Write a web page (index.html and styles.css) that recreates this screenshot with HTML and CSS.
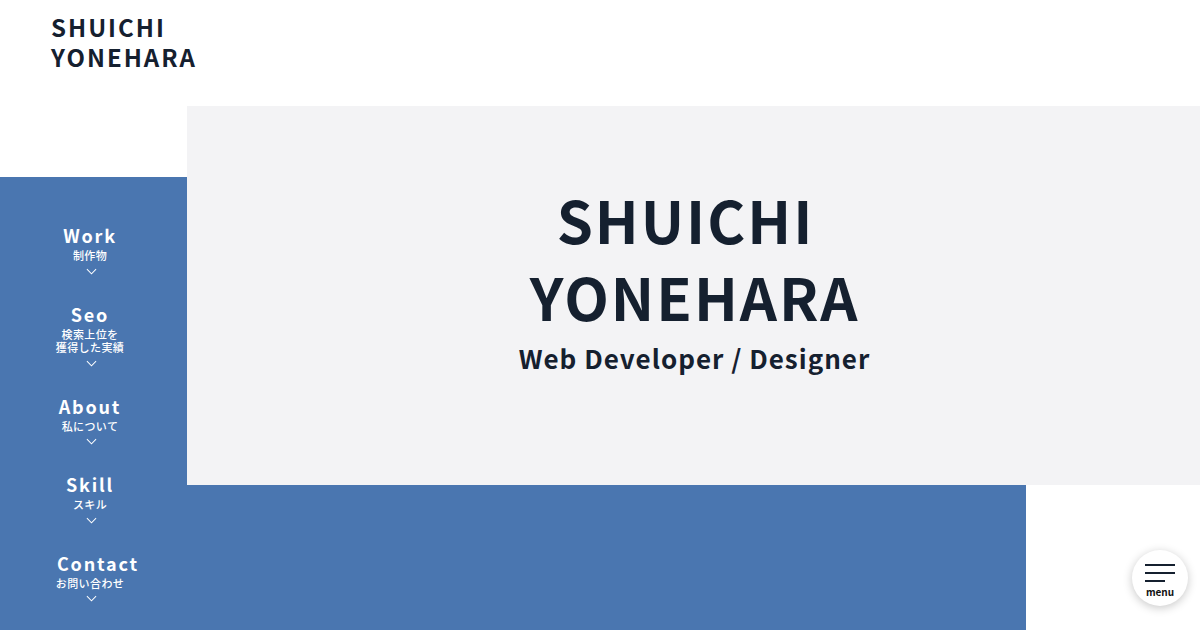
FILE: index.html
```html
<!DOCTYPE html>
<html lang="ja">
<head>
<meta charset="utf-8">
<title>SHUICHI YONEHARA</title>
<link rel="stylesheet" href="styles.css">
</head>
<body>
<div class="page">
  <header class="site-header">
    <a class="logo" href="#">SHUICHI<br>YONEHARA</a>
  </header>
  <div class="stage">
    <section class="hero">
      <h1 class="hero-title"><span class="line-1">SHUICHI</span><br>YONEHARA</h1>
      <p class="hero-sub">Web Developer / Designer</p>
    </section>
    <nav class="side-nav">
      <a class="nav-item" href="#">
        <span class="nav-en">Work</span>
        <span class="nav-ja">制作物</span>
        <svg class="chev" viewBox="0 0 12 7" width="12" height="7"><polyline points="1,1 6,6 11,1"/></svg>
      </a>
      <a class="nav-item" href="#">
        <span class="nav-en">Seo</span>
        <span class="nav-ja">検索上位を<br>獲得した実績</span>
        <svg class="chev" viewBox="0 0 12 7" width="12" height="7"><polyline points="1,1 6,6 11,1"/></svg>
      </a>
      <a class="nav-item" href="#">
        <span class="nav-en">About</span>
        <span class="nav-ja">私について</span>
        <svg class="chev" viewBox="0 0 12 7" width="12" height="7"><polyline points="1,1 6,6 11,1"/></svg>
      </a>
      <a class="nav-item" href="#">
        <span class="nav-en">Skill</span>
        <span class="nav-ja">スキル</span>
        <svg class="chev" viewBox="0 0 12 7" width="12" height="7"><polyline points="1,1 6,6 11,1"/></svg>
      </a>
      <a class="nav-item" href="#">
        <span class="nav-en">Contact</span>
        <span class="nav-ja">お問い合わせ</span>
        <svg class="chev" viewBox="0 0 12 7" width="12" height="7"><polyline points="1,1 6,6 11,1"/></svg>
      </a>
    </nav>
    <div class="bottom-block"></div>
  </div>
  <button class="menu-btn" type="button">
    <span class="menu-lines"><i></i><i></i><i class="short"></i></span>
    <span class="menu-label">menu</span>
  </button>
</div>
</body>
</html>
```

FILE: styles.css
```css
* { box-sizing: border-box; margin: 0; padding: 0; }
html, body { width: 1200px; height: 630px; overflow: hidden; background: #fff; }
body {
  font-family: "Noto Sans CJK JP", "Noto Sans", sans-serif;
  color: #15202f;
}
a { color: inherit; text-decoration: none; }

.page { position: relative; width: 1200px; height: 630px; display: flex; flex-direction: column; }

.site-header { height: 106px; padding: 12px 0 0 51px; }
.logo {
  display: block;
  font-size: 24px;
  line-height: 30px;
  font-weight: 700;
  letter-spacing: 2px;
  color: #15202f;
}

.stage {
  flex: 1;
  display: grid;
  grid-template-columns: 187px 839px 174px;
  grid-template-rows: 71px 308px 145px;
  grid-template-areas:
    ".   hero   hero"
    "nav hero   hero"
    "nav bottom .";
}

.hero {
  grid-area: hero;
  background: #f3f3f5;
  display: flex;
  flex-direction: column;
  align-items: center;
  padding-top: 75px;
  padding-left: 2px;
}
.hero-title {
  font-size: 58px;
  line-height: 77px;
  font-weight: 700;
  letter-spacing: 2px;
  text-align: center;
  color: #15202f;
}
.hero-title .line-1 { padding-right: 18px; }
.hero-sub {
  margin-top: 5px;
  font-size: 26px;
  line-height: 36px;
  font-weight: 700;
  letter-spacing: 1px;
  color: #15202f;
}

.side-nav {
  grid-area: nav;
  background: #4a76b0;
  display: flex;
  flex-direction: column;
  align-items: center;
  gap: 28px;
  padding: 47px 7px 0 0;
}
.nav-item {
  display: flex;
  flex-direction: column;
  align-items: center;
  color: #fff;
  text-align: center;
}
.nav-en {
  display: block;
  width: 66px;
  font-size: 18px;
  line-height: 22px;
  font-weight: 700;
  letter-spacing: 1.8px;
  white-space: nowrap;
  text-align: center;
}
.nav-ja {
  margin-top: 3px;
  font-size: 11px;
  line-height: 13.5px;
  font-weight: 500;
  letter-spacing: 0.4px;
}
.chev {
  margin-top: 5px;
  margin-left: 3px;
  width: 11px;
  height: 7px;
  fill: none;
  stroke: #fff;
  stroke-width: 1.1;
}

.bottom-block { grid-area: bottom; background: #4a76b0; }

.menu-btn {
  position: absolute;
  left: 1132px;
  top: 550px;
  width: 56px;
  height: 56px;
  border: none;
  border-radius: 50%;
  background: #fff;
  box-shadow: 0 2px 10px rgba(0, 0, 0, 0.22);
  display: flex;
  flex-direction: column;
  align-items: center;
  padding-top: 14px;
  font-family: "Noto Sans CJK JP", "Noto Sans", sans-serif;
  cursor: pointer;
}
.menu-lines { display: flex; flex-direction: column; align-items: flex-start; gap: 6.5px; width: 30px; }
.menu-lines i { display: block; width: 30px; height: 1.5px; background: #15202f; }
.menu-lines i.short { width: 20px; }
.menu-label {
  margin-top: 4px;
  font-size: 10px;
  line-height: 12px;
  font-weight: 700;
  color: #111;
}
```
